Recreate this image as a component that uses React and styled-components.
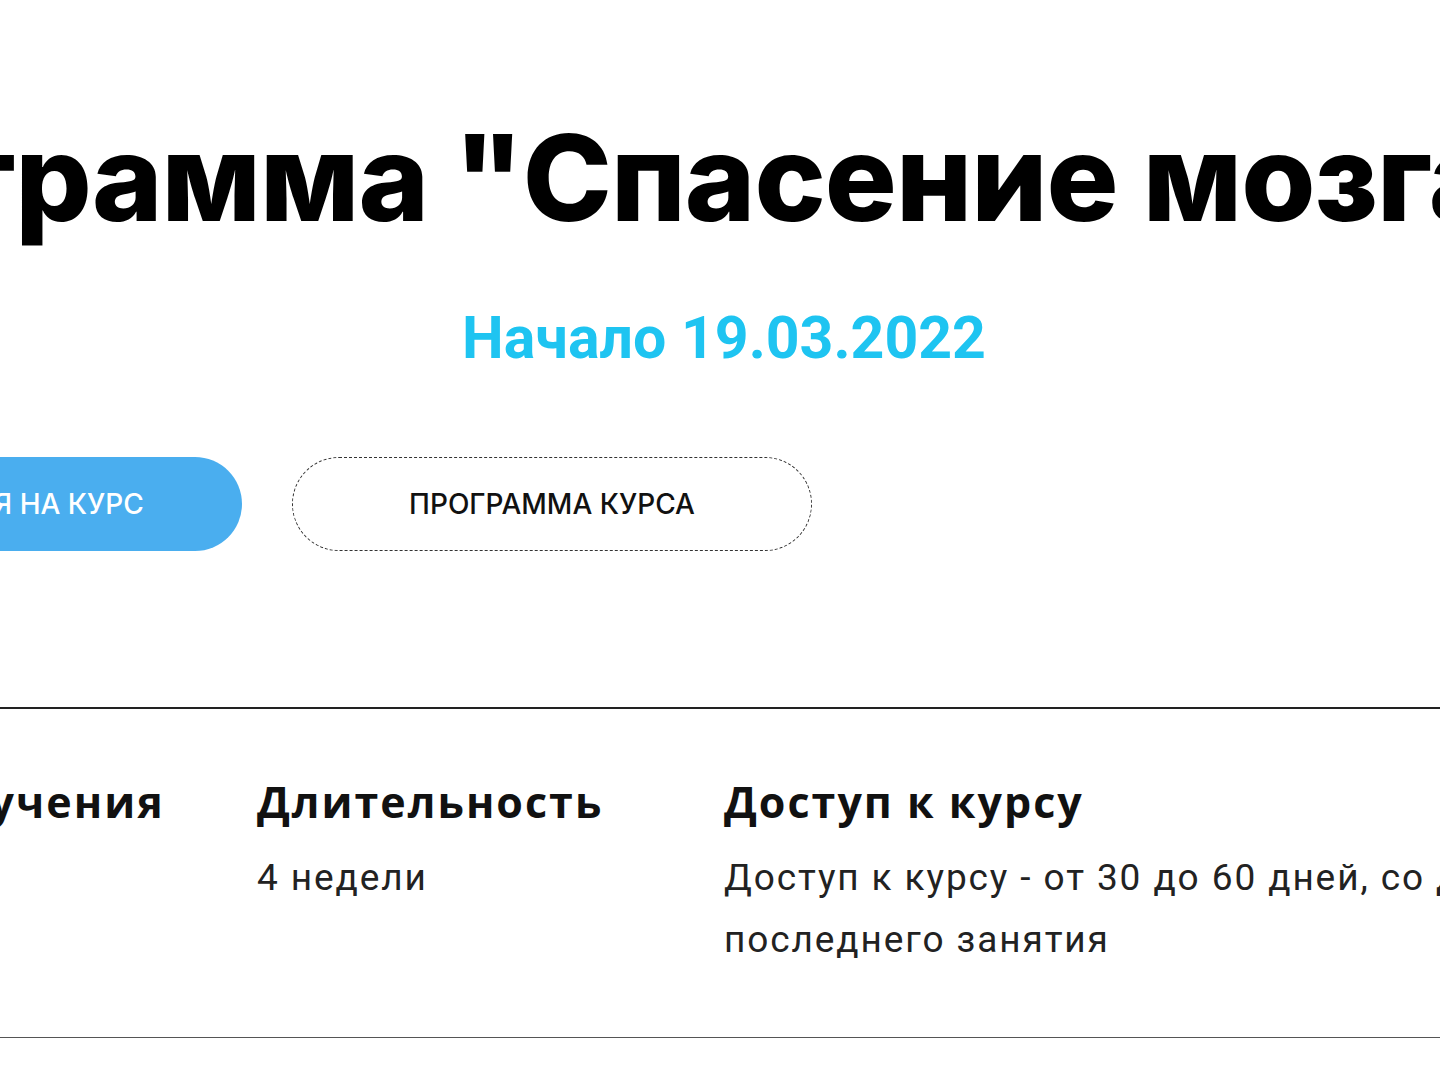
import React from "react";
import styled, { createGlobalStyle } from "styled-components";

const GlobalStyle = createGlobalStyle`
  html, body {
    margin: 0;
    padding: 0;
    background: #ffffff;
    overflow: hidden;
  }
`;

const Page = styled.div`
  width: 1440px;
  height: 1080px;
  overflow: hidden;
  background: #fff;
`;

const Content = styled.div`
  width: 1968px;
  margin-left: -260px;
  padding-top: 118px;
`;

const Title = styled.h1`
  margin: 0 0 0 -17px;
  font-family: Inter, "Open Sans", sans-serif;
  font-weight: 800;
  font-size: 120px;
  line-height: 1;
  letter-spacing: -1px;
  color: #000;
  white-space: nowrap;
`;

const StartDate = styled.div`
  margin-top: 70px;
  text-align: center;
  font-family: Roboto, sans-serif;
  font-weight: 700;
  font-size: 59px;
  line-height: 1;
  color: #1ec4f1;
`;

const Buttons = styled.div`
  display: flex;
  gap: 50px;
  margin: 90px 0 0 -18px;
`;

const Button = styled.button`
  width: 520px;
  height: 94px;
  border-radius: 47px;
  font-family: Inter, "Open Sans", sans-serif;
  font-weight: 500;
  font-size: 28px;
  text-transform: uppercase;
  cursor: pointer;
  background: ${(p) => (p.$primary ? "#4aaeef" : "#fff")};
  color: ${(p) => (p.$primary ? "#fff" : "#111")};
  border: ${(p) => (p.$primary ? "none" : "1px dashed #333")};
`;

const Info = styled.div`
  display: grid;
  grid-template-columns: 501px 467px 820px;
  margin-top: 156px;
  border-top: 2px solid #222;
  border-bottom: 1px solid #555;
  padding: 68px 0 66px 16px;
`;

const Column = styled.div`
  display: flex;
  flex-direction: column;
  gap: 20px;
`;

const Heading = styled.div`
  font-family: "Open Sans", sans-serif;
  font-weight: 700;
  font-size: 43px;
  line-height: 50px;
  letter-spacing: 2px;
  color: #111;
`;

const Text = styled.div`
  font-family: Roboto, sans-serif;
  font-weight: 400;
  font-size: 37px;
  line-height: 62px;
  letter-spacing: 1.9px;
  color: #222;
`;

export default function App() {
  return (
    <Page>
      <GlobalStyle />
      <Content>
        <Title>Программа "Спасение мозга"</Title>
        <StartDate>Начало 19.03.2022</StartDate>
        <Buttons>
          <Button $primary>Записаться на курс</Button>
          <Button>Программа курса</Button>
        </Buttons>
        <Info>
          <Column>
            <Heading>Форма обучения</Heading>
            <Text>Онлайн</Text>
          </Column>
          <Column>
            <Heading>Длительность</Heading>
            <Text>4 недели</Text>
          </Column>
          <Column>
            <Heading>Доступ к курсу</Heading>
            <Text>
              Доступ к курсу - от 30 до 60 дней, со дня
              <br />
              последнего занятия
            </Text>
          </Column>
        </Info>
      </Content>
    </Page>
  );
}
